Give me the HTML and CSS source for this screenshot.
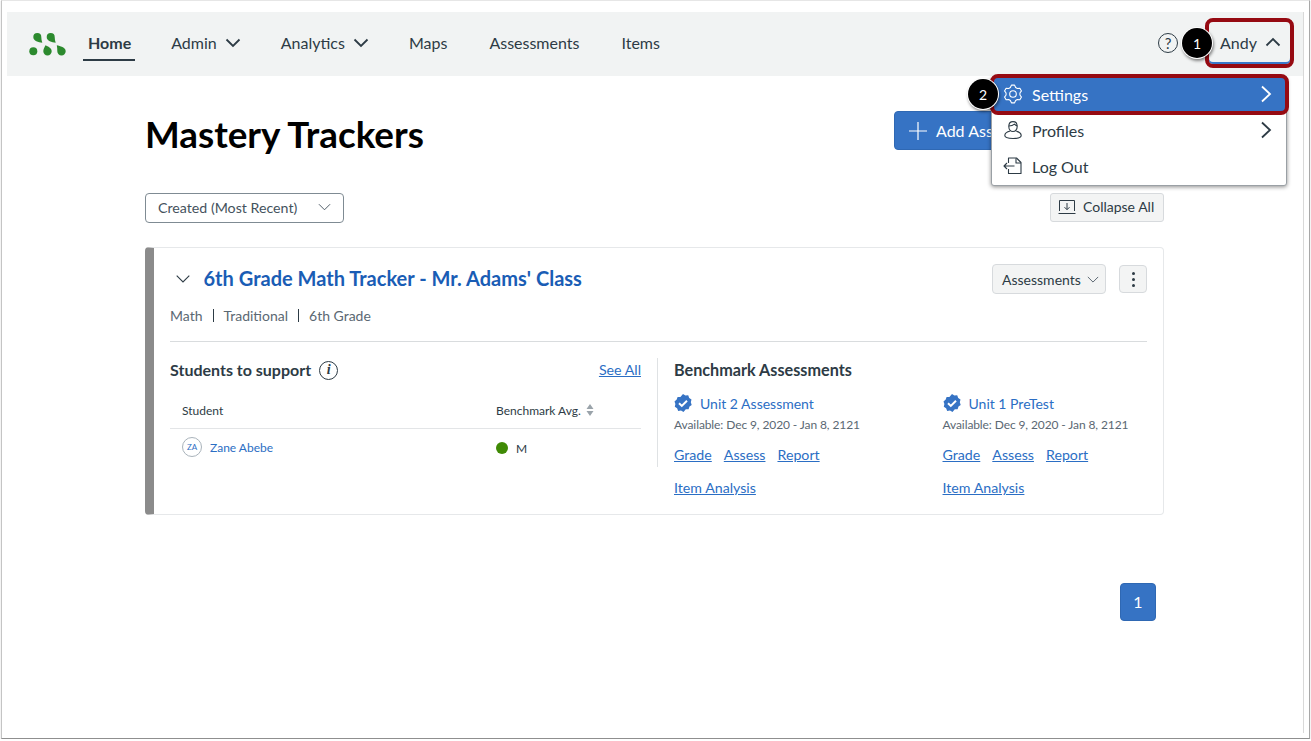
FILE: index.html
```html
<!DOCTYPE html>
<html lang="en">
<head>
<meta charset="utf-8">
<title>Mastery Trackers</title>
<link rel="stylesheet" href="styles.css">
</head>
<body>
<div class="frame">
  <div class="page">
    <header class="topbar">
      <svg class="logo" viewBox="0 -1 38 25" width="38" height="25" aria-hidden="true">
        <path class="logo-drop" d="M13.300 9.700C9.500 9.500 4.300 8 4.300 4A4 4 0 0 1 12.300 4C12.300 6 12.700 8 13.300 9.700z"/>
        <path class="logo-drop" d="M26.700 9.700C22.900 9.500 17.700 8 17.700 4A4 4 0 0 1 25.700 4C25.700 6 26.100 8 26.700 9.700z"/>
        <circle class="logo-drop" cx="4.300" cy="18.200" r="4"/>
        <path class="logo-drop" d="M16.500 12.300C19 13.500 22.700 15 22.700 18.200A4.200 4.200 0 0 1 14.300 18.200C14.300 16.200 15.500 14.500 16.500 12.300z"/>
        <path class="logo-drop" d="M27.800 12.300C31 13 36.700 14.500 36.700 18.200A4.200 4.200 0 0 1 28.300 18.200C28.300 16.200 28.200 14.200 27.800 12.300z"/>
      </svg>
      <nav class="nav">
        <a class="nav-item nav-current">Home</a>
        <a class="nav-item">Admin
          <svg class="nav-chev" viewBox="0 0 16 10" width="16" height="10" aria-hidden="true"><path d="M1.500 1.500 8 8l6.500-6.500"/></svg>
        </a>
        <a class="nav-item">Analytics
          <svg class="nav-chev" viewBox="0 0 16 10" width="16" height="10" aria-hidden="true"><path d="M1.500 1.500 8 8l6.500-6.500"/></svg>
        </a>
        <a class="nav-item nav-wide">Maps</a>
        <a class="nav-item nav-wide">Assessments</a>
        <a class="nav-item">Items</a>
      </nav>
      <div class="user-area">
        <span class="help">?</span>
        <button class="user-btn">Andy
          <svg class="user-chev" viewBox="0 0 16 10" width="16" height="10" aria-hidden="true"><path d="M1.500 8.500 8 2l6.500 6.500"/></svg>
        </button>
        <span class="callout callout-one">1</span>
      </div>
      <div class="menu">
        <a class="menu-row menu-active">
          <svg class="menu-icon" viewBox="0 0 20 20" width="20" height="20" aria-hidden="true"><path d="M7.380 3.510 8.440 1.140H11.560L12.620 3.510 14.310 4.480 16.890 4.210 18.460 6.920 16.930 9.030V10.970L18.460 13.080 16.890 15.790 14.310 15.520 12.620 16.490 11.560 18.860H8.440L7.380 16.490 5.690 15.520 3.110 15.790 1.540 13.080 3.070 10.970V9.030L1.540 6.920 3.110 4.210 5.690 4.480z"/><circle cx="10" cy="10" r="3.300"/></svg>
          <span class="menu-label">Settings</span>
          <svg class="menu-chev" viewBox="0 0 12 18" width="12" height="18" aria-hidden="true"><path d="M2 1.500 10 9l-8 7.500"/></svg>
        </a>
        <a class="menu-row">
          <svg class="menu-icon" viewBox="0 0 20 20" width="20" height="20" aria-hidden="true"><path d="M5.800 6.500C5.800 3.600 7.600 1.600 10 1.600s4.200 2 4.200 4.900-1.900 5-4.200 5-4.200-2.100-4.200-5z"/><path d="M5.800 6C8 6 10 5.500 11.500 4.200c.7.900 1.600 1.500 2.700 1.700"/><path d="M7.300 11c-3 .6-5.500 2.300-5.500 4.600 0 2 3.700 2.900 8.200 2.900s8.200-.9 8.200-2.900c0-2.300-2.500-4-5.500-4.600"/></svg>
          <span class="menu-label">Profiles</span>
          <svg class="menu-chev" viewBox="0 0 12 18" width="12" height="18" aria-hidden="true"><path d="M2 1.500 10 9l-8 7.500"/></svg>
        </a>
        <a class="menu-row">
          <svg class="menu-icon" viewBox="0 0 20 20" width="20" height="20" aria-hidden="true"><path d="M5.500 7V2h8l4.500 4.500V17.500H5.500V13"/><path d="M13 2.200V7h5"/><path d="M11.500 10H1M4 7l-3 3 3 3"/></svg>
          <span class="menu-label">Log Out</span>
        </a>
        <span class="callout callout-two">2</span>
      </div>
    </header>

    <main class="main">
      <div class="title-row">
        <h1 class="title">Mastery Trackers</h1>
        <button class="add-btn">
          <svg class="add-icon" viewBox="0 0 18 18" width="18" height="18" aria-hidden="true"><path d="M9 0v18M0 9h18"/></svg>
          Add Ass
        </button>
      </div>

      <div class="tools-row">
        <button class="sort-select">Created (Most Recent)
          <svg class="thin-chev" viewBox="0 0 14 8" width="13" height="8" aria-hidden="true"><path d="M1 1l6 6 6-6"/></svg>
        </button>
        <button class="collapse-btn">
          <svg class="collapse-icon" viewBox="0 0 18 16" width="18" height="16" aria-hidden="true"><path d="M.5 14.500h17M1.500 12V1.500h15V12M9 4v6.500M6.500 8.200 9 10.700l2.500-2.500"/></svg>
          Collapse All
        </button>
      </div>

      <section class="card">
        <div class="card-head">
          <svg class="card-chev" viewBox="0 0 14 8" width="14" height="8" aria-hidden="true"><path d="M.7.700 7 7 13.300.700"/></svg>
          <a class="card-title">6th Grade Math Tracker - Mr. Adams' Class</a>
          <button class="assess-btn">Assessments
            <svg class="thin-chev" viewBox="0 0 14 8" width="12" height="7" aria-hidden="true"><path d="M1 1l6 6 6-6"/></svg>
          </button>
          <button class="kebab" aria-label="More"><i></i><i></i><i></i></button>
        </div>
        <div class="meta">
          <span>Math</span><span class="meta-sep"></span><span>Traditional</span><span class="meta-sep"></span><span>6th Grade</span>
        </div>
        <hr class="rule">
        <div class="columns">
          <div class="col-left">
            <div class="col-head">
              <h2 class="sub">Students to support</h2>
              <span class="info">i</span>
              <a class="link see-all">See All</a>
            </div>
            <div class="table-head">
              <span class="cell-name">Student</span>
              <span class="cell-avg">Benchmark Avg.
                <svg class="sort-arrows" viewBox="0 0 8 12" width="8" height="12" aria-hidden="true"><path d="M4 0l3.500 5H.5zM4 12 .5 7h7z"/></svg>
              </span>
            </div>
            <div class="table-row">
              <span class="cell-name student">
                <span class="avatar">ZA</span>
                <a class="student-link">Zane Abebe</a>
              </span>
              <span class="cell-avg level"><i class="dot"></i>M</span>
            </div>
          </div>
          <div class="col-right">
            <h2 class="sub bench-head">Benchmark Assessments</h2>
            <div class="bench-grid">
              <article class="bench">
                <div class="bench-name">
                  <svg class="verified" viewBox="0 0 18 18" width="18" height="18" aria-hidden="true"><path class="verified-bg" d="M9 0l2.400 1.500 2.800-.2 1 2.600 2.300 1.600-.7 2.700.9 2.700-2.200 1.700-.9 2.700-2.800 0L9.500 18 7 16.600l-2.800.3-1.100-2.600L.8 12.800l.6-2.800L.5 7.400l2.200-1.800.9-2.700 2.800 0z"/><path class="verified-check" d="M5 9.200l2.800 2.700L13 6.700"/></svg>
                  <a class="bench-link">Unit 2 Assessment</a>
                </div>
                <p class="avail">Available: Dec 9, 2020 - Jan 8, 2121</p>
                <div class="bench-links"><a class="link">Grade</a><a class="link">Assess</a><a class="link">Report</a></div>
                <div class="bench-links"><a class="link">Item Analysis</a></div>
              </article>
              <article class="bench">
                <div class="bench-name">
                  <svg class="verified" viewBox="0 0 18 18" width="18" height="18" aria-hidden="true"><path class="verified-bg" d="M9 0l2.400 1.500 2.800-.2 1 2.600 2.300 1.600-.7 2.700.9 2.700-2.200 1.700-.9 2.700-2.800 0L9.500 18 7 16.600l-2.800.3-1.100-2.600L.8 12.800l.6-2.800L.5 7.400l2.200-1.800.9-2.700 2.800 0z"/><path class="verified-check" d="M5 9.200l2.800 2.700L13 6.700"/></svg>
                  <a class="bench-link">Unit 1 PreTest</a>
                </div>
                <p class="avail">Available: Dec 9, 2020 - Jan 8, 2121</p>
                <div class="bench-links"><a class="link">Grade</a><a class="link">Assess</a><a class="link">Report</a></div>
                <div class="bench-links"><a class="link">Item Analysis</a></div>
              </article>
            </div>
          </div>
        </div>
      </section>

      <div class="pager"><button class="page-btn">1</button></div>
    </main>
  </div>
</div>
</body>
</html>
```

FILE: styles.css
```css
* { box-sizing: border-box; }
html, body { margin: 0; padding: 0; background: #fff; }
body {
  font-family: Lato, "Liberation Sans", sans-serif;
  color: #2d3b45;
  overflow: hidden;
}
button { font-family: inherit; cursor: pointer; }
a { cursor: pointer; }

.frame {
  width: 1309px;
  height: 739px;
  margin-left: 1px;
  padding: 11px 0 5px 5px;
  border: 1px solid #c4c4c4;
  border-top-color: #e6e6e6;
  border-bottom-color: #8f8f8f;
  border-right-color: #a8a8a8;
  box-shadow: 0 1px 1px rgba(0, 0, 0, .25);
}
.page {
  width: 1297px;
  height: 100%;
  border-right: 1px solid #d9d9d9;
}

/* top bar */
.topbar {
  position: relative;
  z-index: 2;
  display: flex;
  align-items: center;
  height: 64px;
  padding-left: 22px;
  background: #f1f3f3;
}
.logo { flex: none; display: block; }
.logo-drop { fill: #2c8a2e; }
.nav { display: flex; align-items: stretch; height: 100%; margin-left: 21px; }
.nav-item {
  display: flex;
  align-items: center;
  gap: 8px;
  margin-right: 40px;
  padding-bottom: 4px;
  font-size: 16px;
  color: #2d3b45;
}
.nav-wide { margin-right: 42px; }
.nav-current {
  position: relative;
  font-weight: 700;
}
.nav-current::after {
  content: "";
  position: absolute;
  left: -5px;
  right: -4px;
  bottom: 15px;
  height: 2px;
  background: #2d3b45;
}
.nav-chev { margin-top: 2px; fill: none; stroke: #2d3b45; stroke-width: 1.800; }
.user-chev { fill: none; stroke: #2d3b45; stroke-width: 1.800; }
.user-area {
  position: relative;
  display: flex;
  align-items: center;
  margin-left: auto;
  margin-right: 9px;
  margin-bottom: 2px;
}
.help {
  display: flex;
  align-items: center;
  justify-content: center;
  width: 20px;
  height: 20px;
  margin-right: 27px;
  border: 1.300px solid #2d3b45;
  border-radius: 50%;
  font-size: 15px;
  line-height: 1;
}
.user-btn {
  display: flex;
  align-items: center;
  justify-content: center;
  gap: 8px;
  width: 89px;
  height: 50px;
  padding: 0 0 2px 2px;
  font-size: 16px;
  color: #2d3b45;
  background: #f1f3f3;
  border: 4px solid #960a12;
  border-radius: 8px;
  box-shadow: inset 0 -2px 0 #3a78c9;
}
.callout {
  position: absolute;
  display: flex;
  align-items: center;
  justify-content: center;
  width: 30px;
  height: 30px;
  border-radius: 50%;
  background: #000;
  color: #fff;
  font-size: 14px;
  box-shadow: 0 0 0 1px #fff, 1px 2px 3px 1px rgba(0, 0, 0, .45);
}
.callout-one { left: 24px; top: 10px; }
.callout-two { left: -24px; top: 1px; }

/* dropdown menu */
.menu {
  position: absolute;
  top: 65px;
  right: 16px;
  width: 296px;
  height: 109px;
  background: #fff;
  border: 1px solid #9aa0a5;
  border-radius: 3px;
  box-shadow: 0 1px 4px rgba(0, 0, 0, .45);
}
.menu-row {
  display: flex;
  align-items: center;
  height: 36px;
  padding: 0 14px 2px 11px;
  font-size: 16px;
  color: #2d3b45;
}
.menu-active {
  height: 41px;
  margin: -4px -3px -2px -2px;
  padding: 0 13px 1px 9px;
  color: #fff;
  background: #3673c4;
  border: 4px solid #960a12;
  border-radius: 8px;
}
.menu-icon { flex: none; fill: none; stroke: currentColor; stroke-width: 1.100; stroke-linejoin: round; }
.menu-label { flex: 1; margin-left: 9px; }
.menu-chev { flex: none; fill: none; stroke: currentColor; stroke-width: 1.800; }

/* main */
.main {
  width: 1019px;
  margin-left: 138px;
  padding-top: 35px;
}
.title-row {
  display: flex;
  align-items: center;
  justify-content: space-between;
  height: 39px;
}
.title {
  margin: 8px 0 0;
  font-size: 36.800px;
  font-weight: 700;
  line-height: 39px;
  color: #000;
}
.add-btn {
  display: flex;
  align-items: center;
  gap: 9px;
  width: 270px;
  height: 39px;
  padding: 0 14px;
  font-size: 16px;
  color: #fff;
  background: #3673c4;
  border: 1px solid #2f68b3;
  border-radius: 4px;
}
.add-icon { fill: none; stroke: #fff; stroke-width: 1.200; }
.tools-row {
  display: flex;
  align-items: flex-start;
  justify-content: space-between;
  margin-top: 43px;
}
.sort-select {
  display: flex;
  align-items: center;
  justify-content: space-between;
  width: 199px;
  height: 30px;
  padding: 0 12px 2px 12px;
  font-size: 14.200px;
  color: #44525d;
  background: #fff;
  border: 1px solid #7f8b93;
  border-radius: 4px;
}
.thin-chev { fill: none; stroke: #44525d; stroke-width: 1; }
.collapse-btn {
  display: flex;
  align-items: center;
  gap: 7px;
  width: 114px;
  height: 29px;
  padding: 0 0 2px 7px;
  font-size: 14px;
  color: #2d3b45;
  background: #f3f4f4;
  border: 1px solid #d7dadd;
  border-radius: 3px;
}
.collapse-icon { flex: none; fill: none; stroke: #2d3b45; stroke-width: 1; }

/* card */
.card {
  height: 268px;
  margin-top: 24px;
  padding: 16px 16px 0 16px;
  background: #fff;
  border: 1px solid #e6e8ea;
  border-left: 9px solid #8b8b8b;
  border-radius: 4px;
}
.card-head {
  display: flex;
  align-items: center;
  height: 30px;
}
.card-chev { flex: none; margin-left: 6px; fill: none; stroke: #2d3b45; stroke-width: 1.100; }
.card-title {
  flex: 1;
  margin-left: 13.500px;
  padding-bottom: 2px;
  font-size: 20.050px;
  font-weight: 700;
  color: #1a5db5;
}
.assess-btn {
  display: flex;
  align-items: center;
  gap: 6px;
  width: 114px;
  height: 30px;
  padding: 0 0 0 9px;
  font-size: 14px;
  color: #2d3b45;
  background: #f3f4f4;
  border: 1px solid #d7dadd;
  border-radius: 4px;
}
.kebab {
  display: flex;
  flex-direction: column;
  align-items: center;
  justify-content: center;
  gap: 3px;
  width: 28px;
  height: 28px;
  margin-left: 13px;
  padding: 0;
  background: #f3f4f4;
  border: 1px solid #d7dadd;
  border-radius: 4px;
}
.kebab i { display: block; width: 3px; height: 3px; border-radius: 50%; background: #2d3b45; }
.meta {
  display: flex;
  align-items: center;
  height: 20px;
  margin-top: 11px;
  font-size: 14px;
  color: #5b6873;
}
.meta-sep { width: 1px; height: 13px; margin: 0 10px; background: #2d3b45; }
.rule { height: 1px; margin: 16px 0 0; border: 0; background: #d9dcde; }
.columns { display: flex; align-items: flex-start; margin-top: 16px; }
.col-left {
  flex: none;
  width: 488px;
  height: 109px;
  padding-right: 16px;
  border-right: 1px solid #dfe2e4;
}
.col-head { display: flex; align-items: center; height: 22px; }
.sub { margin: 0; font-size: 16px; font-weight: 700; color: #2d3b45; }
.info {
  display: flex;
  align-items: center;
  justify-content: center;
  width: 19px;
  height: 19px;
  margin: 2px 0 0 8px;
  border: 1.200px solid #2d3b45;
  border-radius: 50%;
  font-family: "Liberation Serif", serif;
  font-size: 14px;
  font-style: italic;
  font-weight: 700;
}
.link { color: #2b6ec4; font-size: 14.200px; text-decoration: underline; }
.see-all { margin-left: auto; }
.table-head {
  display: flex;
  align-items: center;
  height: 49px;
  padding-top: 12px;
  font-size: 12px;
  border-bottom: 1px solid #e3e5e7;
}
.cell-name { flex: none; width: 326px; padding-left: 12px; }
.cell-avg { display: flex; align-items: center; gap: 5px; }
.sort-arrows { fill: #9aa3aa; }
.table-row { display: flex; align-items: center; height: 36px; font-size: 12px; }
.student { display: flex; align-items: center; gap: 8px; }
.avatar {
  display: flex;
  align-items: center;
  justify-content: center;
  width: 20px;
  height: 20px;
  border: 1px solid #a9b3bb;
  border-radius: 50%;
  font-size: 8px;
  color: #2b6ec4;
}
.student-link { color: #2b6ec4; }
.level { gap: 8px; margin-top: 2px; }
.dot { display: block; width: 12px; height: 12px; border-radius: 50%; background: #3f8a05; }
.col-right { flex: 1; margin-left: 16px; }
.bench-head { font-size: 16.200px; line-height: 24px; }
.bench-grid { display: grid; grid-template-columns: 268.500px 1fr; margin-top: 10px; }
.bench-name { display: flex; align-items: center; gap: 8px; height: 22px; }
.verified { flex: none; }
.verified-bg { fill: #3673c4; }
.verified-check { fill: none; stroke: #fff; stroke-width: 2; }
.bench-link { font-size: 14px; color: #2b6ec4; }
.avail { margin: 1px 0 0; font-size: 12px; line-height: 20px; letter-spacing: -.1px; color: #5b6873; }
.bench-links { display: flex; gap: 12px; height: 22px; margin-top: 11px; line-height: 22px; }
.avail + .bench-links { margin-top: 9px; }

/* pagination */
.pager { display: flex; justify-content: flex-end; margin-top: 68px; padding-right: 8px; }
.page-btn {
  width: 36px;
  height: 38px;
  padding: 0 0 2px;
  font-size: 16px;
  color: #fff;
  background: #3673c4;
  border: 1px solid #2f68b3;
  border-radius: 4px;
}
```
